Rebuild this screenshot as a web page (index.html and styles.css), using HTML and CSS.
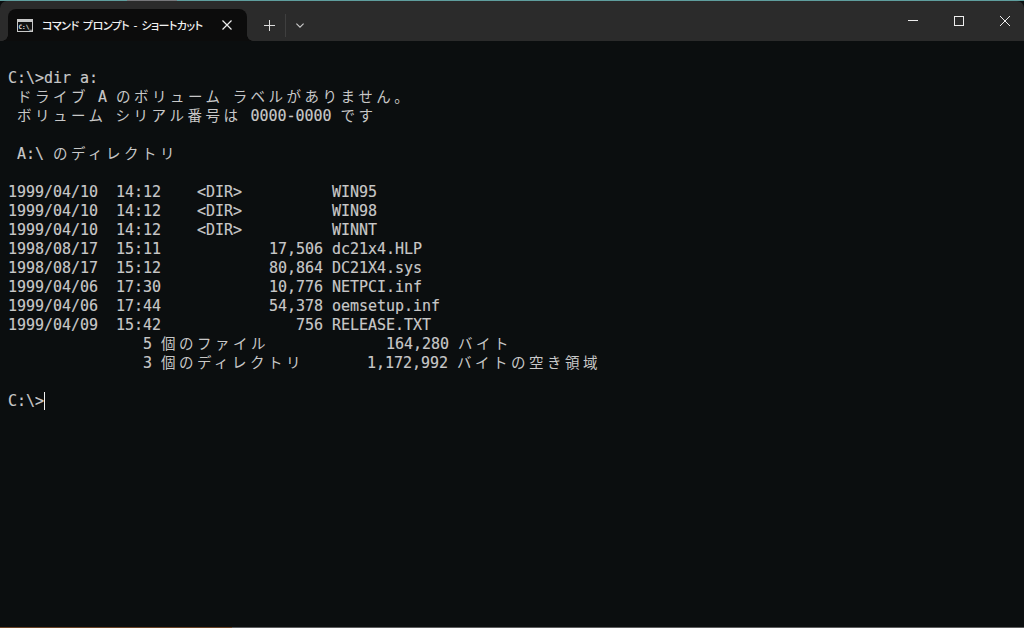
FILE: index.html
```html
<!DOCTYPE html>
<html lang="ja">
<head>
<meta charset="utf-8">
<title>コマンド プロンプト - ショートカット</title>
<link rel="stylesheet" href="styles.css">
</head>
<body>
<div class="window">
  <header class="titlebar">
    <div class="tab">
      <svg class="tab-icon" width="16" height="13" viewBox="0 0 16 13"><rect x="0.5" y="0.5" width="15" height="12" fill="#111" stroke="#c8c8c8"/><rect x="1" y="1" width="14" height="2" fill="#c8c8c8"/><text x="1.5" y="10" class="tab-icon-text">C:\_</text></svg>
      <span class="tab-title">コマンド プロンプト - ショートカット</span>
      <svg class="tab-close" width="10" height="10" viewBox="0 0 10 10"><path d="M0.5 0.5 9.5 9.5M9.5 0.5 0.5 9.5" stroke="#eee" stroke-width="1.2" fill="none"/></svg>
    </div>
    <div class="tab-actions">
      <svg width="11" height="11" viewBox="0 0 11 11"><path d="M5.5 0V11M0 5.5H11" stroke="#ddd" stroke-width="1" fill="none"/></svg>
      <span class="tab-sep"></span>
      <svg width="8" height="5" viewBox="0 0 8 5"><path d="M0.4 0.6 4 4.2 7.6 0.6" stroke="#ccc" stroke-width="1.1" fill="none"/></svg>
    </div>
    <div class="win-controls">
      <span class="win-btn"><svg width="10" height="10" viewBox="0 0 10 10"><path d="M0 4.5H10" stroke="#eee" fill="none"/></svg></span>
      <span class="win-btn"><svg width="10" height="10" viewBox="0 0 10 10"><rect x="0.5" y="0.5" width="9" height="9" fill="none" stroke="#eee"/></svg></span>
      <span class="win-btn"><svg width="10" height="10" viewBox="0 0 10 10"><path d="M0 0 10 10M10 0 0 10" stroke="#eee" fill="none"/></svg></span>
    </div>
  </header>
  <main class="console">
<div class="line"> </div>
<div class="line">C:\&gt;dir a:</div>
<div class="line"> <span class="w">ドライブ</span> A <span class="w">のボリューム</span> <span class="w">ラベルがありません。</span></div>
<div class="line"> <span class="w">ボリューム</span> <span class="w">シリアル番号は</span> 0000-0000 <span class="w">です</span></div>
<div class="line"> </div>
<div class="line"> A:\ <span class="w">のディレクトリ</span></div>
<div class="line"> </div>
<div class="line">1999/04/10  14:12    &lt;DIR&gt;          WIN95</div>
<div class="line">1999/04/10  14:12    &lt;DIR&gt;          WIN98</div>
<div class="line">1999/04/10  14:12    &lt;DIR&gt;          WINNT</div>
<div class="line">1998/08/17  15:11            17,506 dc21x4.HLP</div>
<div class="line">1998/08/17  15:12            80,864 DC21X4.sys</div>
<div class="line">1999/04/06  17:30            10,776 NETPCI.inf</div>
<div class="line">1999/04/06  17:44            54,378 oemsetup.inf</div>
<div class="line">1999/04/09  15:42               756 RELEASE.TXT</div>
<div class="line">               5 <span class="w">個のファイル</span>             164,280 <span class="w">バイト</span></div>
<div class="line">               3 <span class="w">個のディレクトリ</span>       1,172,992 <span class="w">バイトの空き領域</span></div>
<div class="line"> </div>
<div class="line">C:\&gt;<span class="cursor"></span></div>
  </main>
</div>
</body>
</html>
```
FILE: styles.css
```css
html, body { margin: 0; padding: 0; height: 100%; overflow: hidden; }
body {
  background:
    linear-gradient(to right, #5f9e9e 0 127px, #77777a 127px 177px, #5f9e9e 177px) top / 100% 1px no-repeat,
    linear-gradient(to right, #6a4426 0 232px, #5e5e5e 232px) bottom / 100% 1px no-repeat,
    #0b0e0f;
}
.window { display: flex; flex-direction: column; height: 626px; margin: 1px 0; overflow: hidden; border-radius: 7px 7px 0 4px; background: #0b0e0f; }
.titlebar { display: flex; align-items: flex-end; height: 40px; background: #2b2b2b; flex: none; }
.tab { position: relative; display: flex; align-items: center; width: 239px; height: 32px; margin-left: 8px; background: #0c0c0c; border-radius: 8px 8px 0 0; box-sizing: border-box; padding-left: 9px; }
.tab::before, .tab::after { content: ""; position: absolute; bottom: 0; width: 6px; height: 6px; }
.tab::before { left: -6px; background: radial-gradient(circle at 0 0, transparent 5.5px, #0c0c0c 6px); }
.tab::after { right: -6px; background: radial-gradient(circle at 100% 0, transparent 5.5px, #0c0c0c 6px); }
.tab-icon { flex: none; }
.tab-icon-text { font: bold 6px "DejaVu Sans Mono", monospace; fill: #eee; }
.tab-title { margin-left: 9px; font: 500 11px "Noto Sans CJK JP", sans-serif; font-feature-settings: "palt"; letter-spacing: -0.55px; word-spacing: 2.5px; color: #f2f2f2; white-space: pre; width: 180px; flex: none; }
.tab-close { flex: none; }
.tab-actions { display: flex; align-items: center; height: 32px; margin-left: 17px; }
.tab-sep { width: 1px; height: 23px; background: #3f3f3f; margin: 0 10px; }
.win-controls { display: flex; margin-left: auto; margin-right: -4px; align-self: flex-start; }
.win-btn { display: flex; align-items: center; justify-content: center; width: 46px; height: 40px; }
.console { flex: 1; padding-top: 9px; padding-left: 8px; font: 15px/19px "DejaVu Sans Mono", "Noto Sans CJK JP", monospace; color: #c8c8c8; -webkit-text-stroke: 0.15px #c8c8c8; }
.line { height: 19px; white-space: pre; letter-spacing: -0.03px; }
.w { font-family: "Noto Sans CJK JP", sans-serif; font-size: 14.5px; line-height: 0; letter-spacing: 3.5px; -webkit-text-stroke: 0; }
.cursor { display: inline-block; width: 1px; height: 18px; background: #f2f2f2; vertical-align: -4px; }
```
